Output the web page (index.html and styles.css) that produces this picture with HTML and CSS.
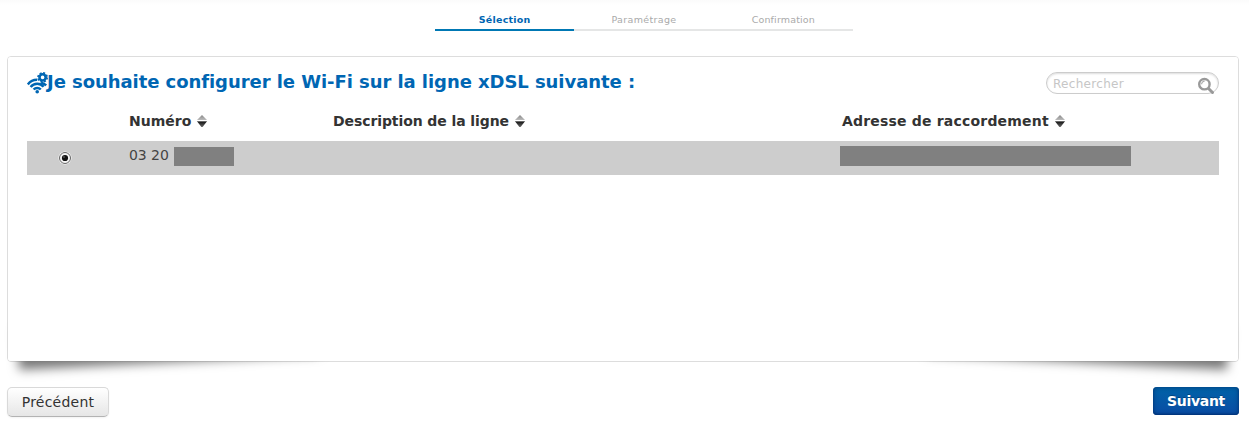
FILE: index.html
```html
<!DOCTYPE html>
<html lang="fr">
<head>
<meta charset="utf-8">
<title>Configuration Wi-Fi</title>
<link rel="stylesheet" href="styles.css">
</head>
<body>
<svg class="defs" width="0" height="0" aria-hidden="true">
  <defs>
    <linearGradient id="up" x1="0" y1="0" x2="0" y2="1"><stop offset="0" stop-color="#888"/><stop offset="1" stop-color="#bbb"/></linearGradient>
    <linearGradient id="down" x1="0" y1="0" x2="0" y2="1"><stop offset="0" stop-color="#888"/><stop offset=".25" stop-color="#222"/><stop offset="1" stop-color="#666"/></linearGradient>
    <symbol id="sort" viewBox="0 0 12 14"><path d="M1 6L6 1l5 5z" fill="url(#up)"/><path d="M.8 7h10.4L6.6 13H5.4z" fill="url(#down)"/></symbol>
  </defs>
</svg>
<ol class="steps">
  <li class="step active"><span class="t1">Sélection</span></li>
  <li class="step"><span class="t2">Paramétrage</span></li>
  <li class="step"><span class="t3">Confirmation</span></li>
</ol>
<main class="panel">
  <header class="panel-head">
    <svg class="wifi" width="21" height="22" viewBox="0 0 21 22">
      <g fill="none" stroke="#0066b3" stroke-width="2.5">
        <path d="M.8 12.4C3.3 9.1 6.4 7.6 10.2 7.7"/>
        <path d="M3.6 15c3.5-4.1 9.6-4.2 13-.2"/>
        <path d="M6.6 17.5c2-2.1 5.2-2.1 7.2 0"/>
        <path d="M14.2 10.8c2 .5 3.6 1.3 5 2.6"/>
        <circle cx="15.6" cy="5.4" r="3.1" stroke-width="2.6"/>
        <circle cx="15.6" cy="5.4" r="4.6" stroke-width="1.6" stroke-dasharray="2 1.613"/>
      </g>
      <circle cx="10.2" cy="19.7" r="1.8" fill="#0066b3"/>
    </svg>
    <h1 class="title">Je souhaite configurer le Wi-Fi sur la ligne xDSL suivante :</h1>
    <label class="search">
      <input class="search-input" type="text" placeholder="Rechercher">
      <svg class="loupe" width="18" height="18" viewBox="0 0 18 18">
        <path d="M11.5 11.5l4 4" stroke="#999" stroke-width="3" stroke-linecap="round"/>
        <circle cx="7.4" cy="7.2" r="5.2" fill="#fff" stroke="#999" stroke-width="2.4"/>
        <path d="M4.6 7.2a3 3 0 0 1 3-3" fill="none" stroke="#aaa" stroke-width="1.2"/>
      </svg>
    </label>
  </header>
  <div class="row head">
    <span></span>
    <span class="cell">Numéro<svg class="sort"><use href="#sort"/></svg></span>
    <span class="cell desc">Description de la ligne<svg class="sort"><use href="#sort"/></svg></span>
    <span class="cell addr">Adresse de raccordement<svg class="sort"><use href="#sort"/></svg></span>
  </div>
  <div class="row line">
    <svg class="radio" width="14" height="14" viewBox="0 0 14 14">
      <circle cx="7" cy="7" r="6.5" fill="#fff"/>
      <circle cx="7" cy="7" r="5.5" fill="#f4f4f4" stroke="#666" stroke-width="1"/>
      <circle cx="7" cy="7" r="3.1" fill="#111"/><circle cx="6" cy="6" r=".8" fill="#777"/>
    </svg>
    <span class="number">03 20<span class="mask short"></span></span>
    <span></span>
    <span class="mask long"></span>
  </div>
</main>
<footer class="actions">
  <button class="btn prev">Précédent</button>
  <button class="btn next">Suivant</button>
</footer>
</body>
</html>
```
FILE: styles.css
```css
* { box-sizing: border-box; }
body {
  margin: 0;
  padding: 0 10px 0 7px;
  height: 443px;
  overflow: hidden;
  background: linear-gradient(#fbfbfb, #fff 5px);
  color: #333;
  font-family: "DejaVu Sans", sans-serif;
}
.defs { position: absolute; }
.steps {
  display: flex;
  width: 418px;
  height: 31px;
  margin: 0 0 25px 428px;
  padding: 0;
  list-style: none;
}
.step {
  flex: 1;
  padding-top: 13px;
  border-bottom: 2px solid #e5e6e6;
  color: #aaa;
  font-size: 9.5px;
  line-height: 13px;
  text-align: center;
}
.step.active { border-color: #0078b4; color: #0066b3; font-weight: bold; }
.t1 { letter-spacing: .24px; }
.t2 { letter-spacing: .35px; }
.t3 { letter-spacing: .15px; }
.panel {
  position: relative;
  z-index: 0;
  height: 306px;
  padding: 0 19px;
  border: 1px solid #ddd;
  border-radius: 4px;
}
/* Lifted-corner shadows under the panel */
.panel::before, .panel::after {
  content: "";
  position: absolute;
  z-index: -2;
  bottom: 15px;
  width: 300px;
  height: 40px;
  box-shadow: 0 16px 11px #777;
}
.panel::before { left: 9px; transform: rotate(-3deg); }
.panel::after { right: 9px; transform: rotate(3deg); }
.panel-head { display: flex; height: 46px; }
.panel-head::before {
  content: "";
  position: absolute;
  z-index: -1;
  inset: 0;
  border-radius: 3px;
  background: #fff;
}
.wifi { margin-top: 15px; flex: none; }
.title {
  margin: 13px 0 0 -1px;
  color: #0066b3;
  font-size: 18px;
  line-height: 24px;
  letter-spacing: -.06px;
  white-space: nowrap;
}
.search {
  display: flex;
  width: 173px;
  height: 22px;
  margin: 15px 0 0 auto;
  border: 1px solid #ccc;
  border-radius: 11px;
  background: #fff;
  box-shadow: inset 0 1px 2px #ddd;
}
.search-input {
  width: 150px;
  padding: 1px 0 0 6px;
  border: 0;
  outline: 0;
  background: transparent;
  font: 12px "DejaVu Sans", sans-serif;
  letter-spacing: .3px;
}
.search-input::placeholder { color: #c6c6c6; opacity: 1; }
.loupe { margin-top: 4px; flex: none; overflow: visible; }
.row { display: grid; grid-template-columns: 102px 204px 509px 1fr; }
.head { height: 38px; font-size: 14px; font-weight: bold; }
.cell { display: flex; align-items: center; height: 36px; }
.desc { letter-spacing: -.09px; }
.addr { letter-spacing: .19px; }
.sort { width: 12px; height: 14px; margin-left: 5px; }
.line { height: 34px; background: #cdcdcd; font-size: 14px; color: #444; }
.radio { margin: 10px 0 0 31px; }
.number { display: flex; height: 29px; line-height: 29px; letter-spacing: -.05px; }
.mask { background: gray; }
.short { width: 60px; height: 19px; margin: 6px 0 0 5px; }
.long { width: 291px; height: 20px; margin: 5px 0 0 -2px; }
.actions { display: flex; justify-content: space-between; margin-top: 25px; }
.btn {
  padding: 0;
  border-radius: 5px;
  font-family: "DejaVu Sans", sans-serif;
  font-size: 14px;
  text-align: center;
}
.prev {
  width: 102px;
  height: 30px;
  border: 1px solid #d9d9d9;
  border-bottom-color: #b3b3b3;
  background: linear-gradient(#fff, #e6e6e6);
  box-shadow: 0 1px 2px rgba(0, 0, 0, .05);
  color: #333;
  letter-spacing: .22px;
}
.next {
  width: 86px;
  height: 28px;
  border: 0;
  border-radius: 4px;
  background: linear-gradient(#0063a8, #0a4ca4);
  box-shadow: inset 0 0 5px #003a78, inset 0 -1px 2px #002c78;
  color: #fff;
  font-weight: bold;
  letter-spacing: -.3px;
  text-shadow: 0 -1px 0 rgba(0, 0, 0, .25);
}
```
